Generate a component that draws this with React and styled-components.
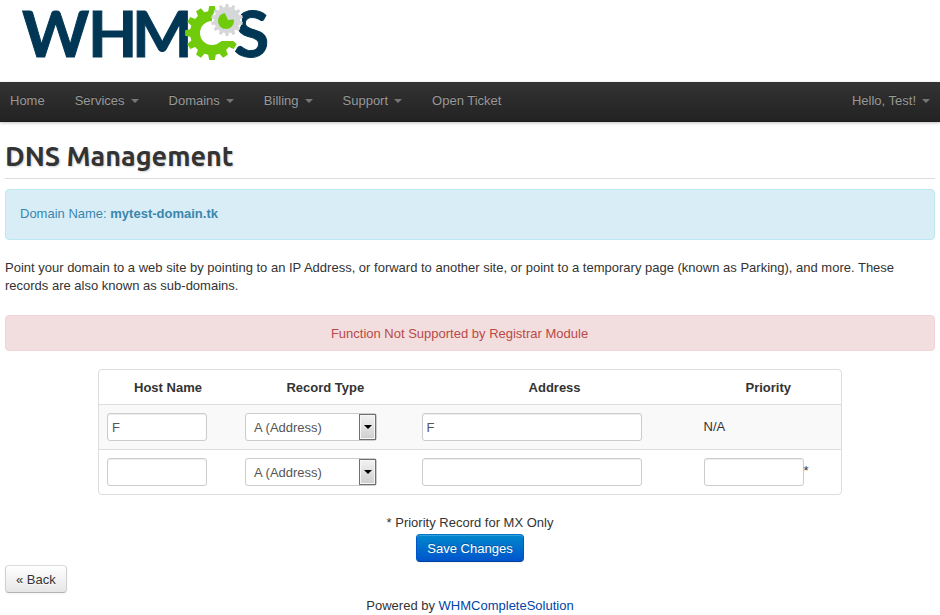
import React from 'react';
import styled, { createGlobalStyle } from 'styled-components';

const GlobalStyle = createGlobalStyle`
  * {
    box-sizing: border-box;
  }
  body {
    margin: 0;
    background: #ffffff;
    color: #333333;
    font-family: 'Liberation Sans', Arial, sans-serif;
    font-size: 13px;
    line-height: 18px;
  }
`;

const Header = styled.header`
  height: 82px;
  padding: 0 20px;
`;

const NavBar = styled.nav`
  display: flex;
  justify-content: space-between;
  height: 40px;
  background: linear-gradient(to bottom, #333333, #222222);
  box-shadow: 0 1px 3px rgba(0, 0, 0, 0.25), inset 0 -1px 0 rgba(0, 0, 0, 0.1);
`;

const NavGroup = styled.div`
  display: flex;
  gap: 10px;
`;

const NavItem = styled.a`
  display: flex;
  align-items: center;
  gap: 6px;
  padding: 0 10px 3px;
  color: #999999;
  text-decoration: none;
  text-shadow: 0 -1px 0 rgba(0, 0, 0, 0.25);
`;

const Caret = styled.span`
  width: 0;
  height: 0;
  border-top: 4px solid #777777;
  border-left: 4px solid transparent;
  border-right: 4px solid transparent;
`;

const Main = styled.main`
  padding: 16px 5px 0;
`;

const Title = styled.h1`
  margin: 0 0 10px;
  padding-bottom: 4px;
  border-bottom: 1px solid #dddddd;
  font-family: Ubuntu, Lato, sans-serif;
  font-size: 27px;
  font-weight: bold;
  line-height: 36px;
  color: #333333;
  text-shadow: 1px 1px 2px rgba(0, 0, 0, 0.2);
`;

const Alert = styled.div`
  padding: ${({ $error }) => ($error ? '9px 35px 7px 14px' : '15px 35px 16px 14px')};
  border: 1px solid ${({ $error }) => ($error ? '#eed3d7' : '#bce8f1')};
  border-radius: 4px;
  background: ${({ $error }) => ($error ? '#f2dede' : '#d9edf7')};
  color: ${({ $error }) => ($error ? '#b94a48' : '#3a87ad')};
  text-align: ${({ $error }) => ($error ? 'center' : 'left')};
`;

const Intro = styled.p`
  margin: 19px 0 20px;
`;

const RecordTable = styled.table`
  width: 80%;
  margin: 18px auto 19px;
  border: 1px solid #dddddd;
  border-radius: 4px;
  border-collapse: separate;
  border-spacing: 0;
  table-layout: fixed;
`;

const HeadCell = styled.th`
  width: ${({ $width }) => $width};
  padding: 9px 8px 7px;
  text-align: center;
`;

const Cell = styled.td`
  padding: 8px;
  border-top: 1px solid #dddddd;
  background: ${({ $striped }) => ($striped ? '#f9f9f9' : 'transparent')};
`;

const TextBox = styled.input`
  display: inline-block;
  vertical-align: middle;
  width: ${({ $wide }) => ($wide ? '220px' : '100px')};
  height: 28px;
  padding: 4px;
  border: 1px solid #cccccc;
  border-radius: 3px;
  background: #ffffff;
  box-shadow: inset 0 1px 1px rgba(0, 0, 0, 0.075);
  color: #555555;
  font: inherit;
`;

const SelectWrap = styled.span`
  display: block;
  position: relative;
  width: 132px;
  height: 28px;
`;

const Select = styled.select`
  appearance: none;
  width: 100%;
  height: 28px;
  padding: 5px 20px 3px 8px;
  border: 1px solid #cccccc;
  border-radius: 3px;
  background: #ffffff;
  color: #555555;
  font: inherit;
`;

const SelectArrow = styled.span`
  position: absolute;
  top: 1px;
  right: 1px;
  bottom: 1px;
  display: flex;
  align-items: center;
  justify-content: center;
  width: 17px;
  border: 1px solid #707070;
  background: linear-gradient(to bottom, #f2f2f2, #cfcfcf);
  box-shadow: inset 0 0 0 1px #f6f6f6;
  pointer-events: none;

  &::after {
    content: '';
    border-top: 4px solid #000000;
    border-left: 4px solid transparent;
    border-right: 4px solid transparent;
  }
`;

const FormFooter = styled.div`
  display: flex;
  flex-direction: column;
  align-items: center;
  gap: 2px;
`;

const Button = styled.button`
  height: 28px;
  padding: 2px 10px 0;
  border: 1px solid;
  border-color: ${({ $primary }) =>
    $primary ? '#0074cc #0055cc #003f99' : '#dddddd #d0d0d0 #b3b3b3'};
  border-radius: 4px;
  background: ${({ $primary }) =>
    $primary
      ? 'linear-gradient(to bottom, #0088cc, #0055cc)'
      : 'linear-gradient(to bottom, #ffffff, #e6e6e6)'};
  box-shadow: inset 0 1px 0 rgba(255, 255, 255, 0.2), 0 1px 2px rgba(0, 0, 0, 0.05);
  color: ${({ $primary }) => ($primary ? '#ffffff' : '#333333')};
  font: inherit;
  text-shadow: ${({ $primary }) =>
    $primary ? '0 -1px 0 rgba(0, 0, 0, 0.25)' : '0 1px 1px rgba(255, 255, 255, 0.75)'};
  cursor: pointer;
`;

const BackForm = styled.form`
  display: flex;
  margin: 3px 0 4px;
`;

const Footer = styled.footer`
  text-align: center;
`;

const FooterLink = styled.a`
  color: #0044aa;
  text-decoration: none;
`;

const LogoSvg = styled.svg`
  display: block;
  overflow: visible;
`;

const LogoText = styled.text`
  fill: #013654;
  stroke: #013654;
  stroke-width: 1px;
  font-family: Lato, sans-serif;
  font-size: 64px;
  font-weight: bold;
`;

const gearPoints = (cx, cy, outer, root, teeth) => {
  const step = (Math.PI * 2) / teeth;
  const points = [];
  for (let i = 0; i < teeth; i += 1) {
    const mid = i * step + Math.PI / 2;
    [
      [-0.33, root],
      [-0.2, outer],
      [0.2, outer],
      [0.33, root],
    ].forEach(([offset, r]) => {
      const a = mid + offset * step;
      points.push(`${(cx + r * Math.cos(a)).toFixed(1)},${(cy + r * Math.sin(a)).toFixed(1)}`);
    });
  }
  return points.join(' ');
};

const Logo = () => (
  <LogoSvg width='260' height='80' viewBox='20 0 260 80' role='img' aria-label='WHMCS'>
    <LogoText x='22' y='57'>W</LogoText>
    <LogoText x='88' y='57'>H</LogoText>
    <LogoText x='132' y='57'>M</LogoText>
    <polygon points={gearPoints(212, 33, 27, 22, 12)} fill='#70cc0a' />
    <circle cx='212' cy='33' r='12' fill='#ffffff' />
    <polygon points='212,21 242,21 242,38 235,41 222,41 212,45' fill='#ffffff' />
    <LogoText x='234' y='57'>S</LogoText>
    <circle cx='227' cy='20' r='15' fill='#ffffff' />
    <polygon points={gearPoints(227, 20, 16, 13, 14)} fill='#d6d7d8' />
    <circle cx='226' cy='21' r='8' fill='#70cc0a' />
    <path d='M228 20 L224 11 L233 10 L237 19 Z' fill='#d6d7d8' />
  </LogoSvg>
);

const menu = [
  { label: 'Home' },
  { label: 'Services', dropdown: true },
  { label: 'Domains', dropdown: true },
  { label: 'Billing', dropdown: true },
  { label: 'Support', dropdown: true },
  { label: 'Open Ticket' },
];

const columns = [
  { label: 'Host Name', width: '18.6%' },
  { label: 'Record Type', width: '23.8%' },
  { label: 'Address', width: '38%' },
  { label: 'Priority', width: '19.6%' },
];

const records = [
  { id: 1, host: 'F', address: 'F', saved: true },
  { id: 2, host: '', address: '' },
];

const RecordTypeSelect = (props) => (
  <SelectWrap>
    <Select defaultValue='A' {...props}>
      <option value='A'>A (Address)</option>
      <option value='MXE'>MXE (Mail Easy)</option>
      <option value='MX'>MX (Mail)</option>
      <option value='CNAME'>CNAME (Alias)</option>
      <option value='TXT'>SPF (txt)</option>
    </Select>
    <SelectArrow />
  </SelectWrap>
);

const RecordRow = ({ record }) => (
  <tr>
    <Cell $striped={record.saved}>
      <TextBox aria-label='Host Name' defaultValue={record.host} />
    </Cell>
    <Cell $striped={record.saved}>
      <RecordTypeSelect aria-label='Record Type' />
    </Cell>
    <Cell $striped={record.saved}>
      <TextBox $wide aria-label='Address' defaultValue={record.address} />
    </Cell>
    <Cell $striped={record.saved}>
      {record.saved ? (
        'N/A'
      ) : (
        <>
          <TextBox aria-label='Priority' />*
        </>
      )}
    </Cell>
  </tr>
);

const NavLink = ({ label, dropdown }) => (
  <NavItem href='#'>
    {label}
    {dropdown && <Caret />}
  </NavItem>
);

const App = () => {
  return (
    <>
      <GlobalStyle />
      <Header>
        <Logo />
      </Header>
      <NavBar>
        <NavGroup>
          {menu.map((item) => (
            <NavLink key={item.label} {...item} />
          ))}
        </NavGroup>
        <NavLink label='Hello, Test!' dropdown />
      </NavBar>
      <Main>
        <Title>DNS Management</Title>
        <Alert>
          Domain Name: <strong>mytest-domain.tk</strong>
        </Alert>
        <Intro>
          Point your domain to a web site by pointing to an IP Address, or forward to another site,
          or point to a temporary page (known as Parking), and more. These records are also known as
          sub-domains.
        </Intro>
        <Alert $error>Function Not Supported by Registrar Module</Alert>
        <form onSubmit={(e) => e.preventDefault()}>
          <RecordTable>
            <thead>
              <tr>
                {columns.map(({ label, width }) => (
                  <HeadCell key={label} $width={width}>
                    {label}
                  </HeadCell>
                ))}
              </tr>
            </thead>
            <tbody>
              {records.map((record) => (
                <RecordRow key={record.id} record={record} />
              ))}
            </tbody>
          </RecordTable>
          <FormFooter>
            <span>* Priority Record for MX Only</span>
            <Button $primary type='submit'>
              Save Changes
            </Button>
          </FormFooter>
        </form>
        <BackForm onSubmit={(e) => e.preventDefault()}>
          <Button type='submit'>« Back</Button>
        </BackForm>
      </Main>
      <Footer>
        Powered by <FooterLink href='#'>WHMCompleteSolution</FooterLink>
      </Footer>
    </>
  );
};

export default App;
